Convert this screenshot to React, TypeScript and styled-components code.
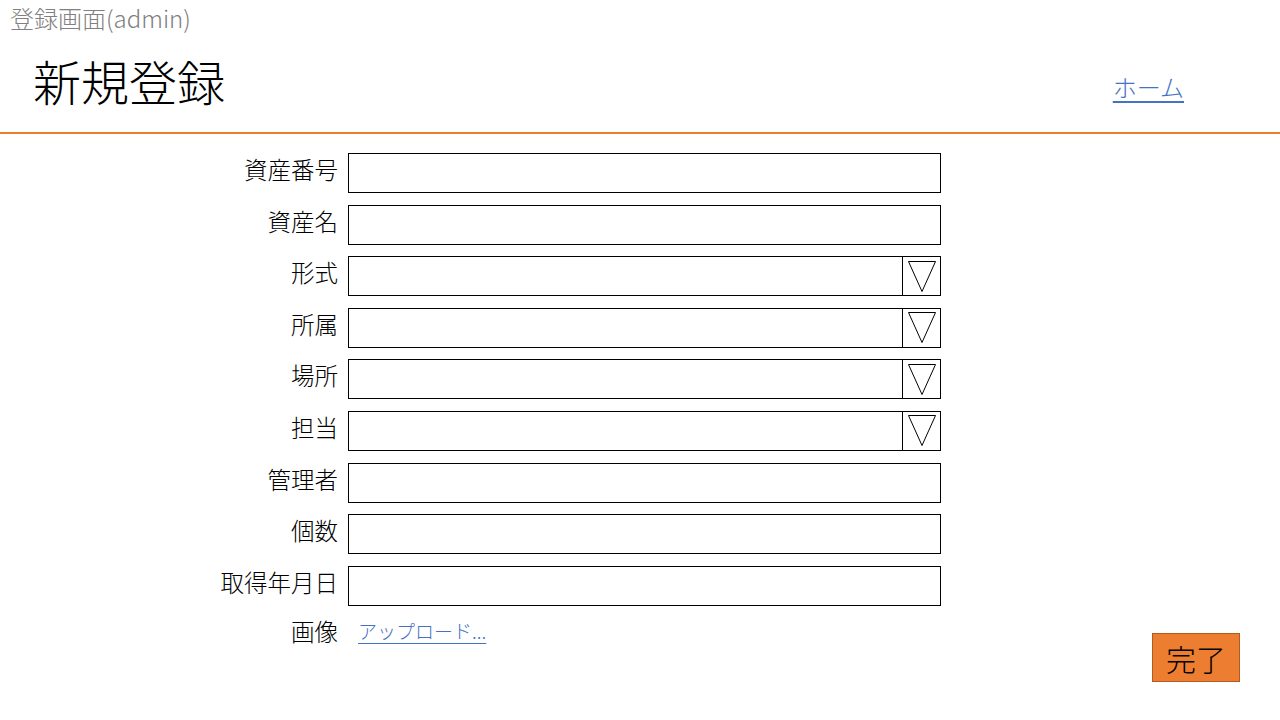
import * as React from "react";
import styled, { createGlobalStyle } from "styled-components";

const GlobalStyle = createGlobalStyle`
  html, body {
    margin: 0;
    padding: 0;
    background: #fff;
  }
  body {
    font-family: "Noto Sans CJK JP", "Noto Sans", sans-serif;
    font-weight: 300;
    color: #000;
  }
`;

const Page = styled.div`
  width: 1280px;
  height: 720px;
  overflow: hidden;
`;

const Header = styled.header`
  border-bottom: 2px solid #ed7d31;
  height: 134px;
  box-sizing: border-box;
`;

const ScreenName = styled.div`
  font-size: 24px;
  line-height: 36px;
  color: #808080;
  padding-left: 10px;
`;

const TitleRow = styled.div`
  display: flex;
  align-items: flex-start;
  justify-content: space-between;
  padding: 0 96px 0 33px;
`;

const Title = styled.h1`
  margin: 0;
  padding-top: 20px;
  font-size: 48px;
  font-weight: 300;
  line-height: 48px;
`;

const Link = styled.a<{ $size: number }>`
  font-size: ${(p) => p.$size}px;
  color: #4472c4;
  text-decoration: underline;
  text-underline-offset: 4px;
  cursor: pointer;
`;

const HomeLink = styled(Link)`
  padding-top: 33px;
`;

const Form = styled.div`
  display: grid;
  grid-template-columns: 338px 593px 1fr;
  column-gap: 10px;
  row-gap: 11.6px;
  padding-top: 19px;
`;

const Label = styled.div<{ $top?: boolean }>`
  grid-column: 1;
  text-align: right;
  font-size: 23.5px;
  line-height: ${(p) => (p.$top ? "28px" : "32px")};
  padding-bottom: ${(p) => (p.$top ? "0" : "8px")};
  white-space: nowrap;
  align-self: ${(p) => (p.$top ? "start" : "center")};
`;

const Field = styled.div`
  grid-column: 2;
  display: flex;
  height: 40px;
  border: 1px solid #000;
  box-sizing: border-box;
`;

const TextInput = styled.input`
  flex: 1;
  border: none;
  outline: none;
  padding: 0 8px;
  font-size: 20px;
  font-family: inherit;
  background: transparent;
  min-width: 0;
`;

const DropButton = styled.div`
  width: 37px;
  border-left: 1px solid #000;
  display: flex;
  align-items: center;
  justify-content: center;
`;

const UploadCell = styled.div`
  grid-column: 2;
  padding-left: 10px;
  line-height: 28px;
`;

const DoneButton = styled.button`
  grid-column: 3;
  justify-self: end;
  align-self: start;
  margin: 16px 40px 0 0;
  width: 88px;
  height: 49px;
  background: #ed7d31;
  border: 1px solid #ae5a21;
  font-family: inherit;
  font-weight: 300;
  font-size: 30px;
  line-height: 1;
  color: #000;
  padding: 0;
  cursor: pointer;
`;

const Triangle = () => (
  <svg width="28" height="31" viewBox="0 0 28 31">
    <polygon points="0.5,0.5 27.5,0.5 14,30.5" fill="none" stroke="#000" strokeWidth="1" />
  </svg>
);

const fields: { label: string; select?: boolean }[] = [
  { label: "資産番号" },
  { label: "資産名" },
  { label: "形式", select: true },
  { label: "所属", select: true },
  { label: "場所", select: true },
  { label: "担当", select: true },
  { label: "管理者" },
  { label: "個数" },
  { label: "取得年月日" },
];

export default function App() {
  return (
    <Page>
      <GlobalStyle />
      <Header>
        <ScreenName>登録画面(admin)</ScreenName>
        <TitleRow>
          <Title>新規登録</Title>
          <HomeLink $size={24}>ホーム</HomeLink>
        </TitleRow>
      </Header>
      <Form>
        {fields.map((f) => (
          <React.Fragment key={f.label}>
            <Label>{f.label}</Label>
            <Field>
              <TextInput />
              {f.select && (
                <DropButton>
                  <Triangle />
                </DropButton>
              )}
            </Field>
          </React.Fragment>
        ))}
        <Label $top>画像</Label>
        <UploadCell>
          <Link $size={19}>アップロード...</Link>
        </UploadCell>
        <DoneButton>完了</DoneButton>
      </Form>
    </Page>
  );
}
